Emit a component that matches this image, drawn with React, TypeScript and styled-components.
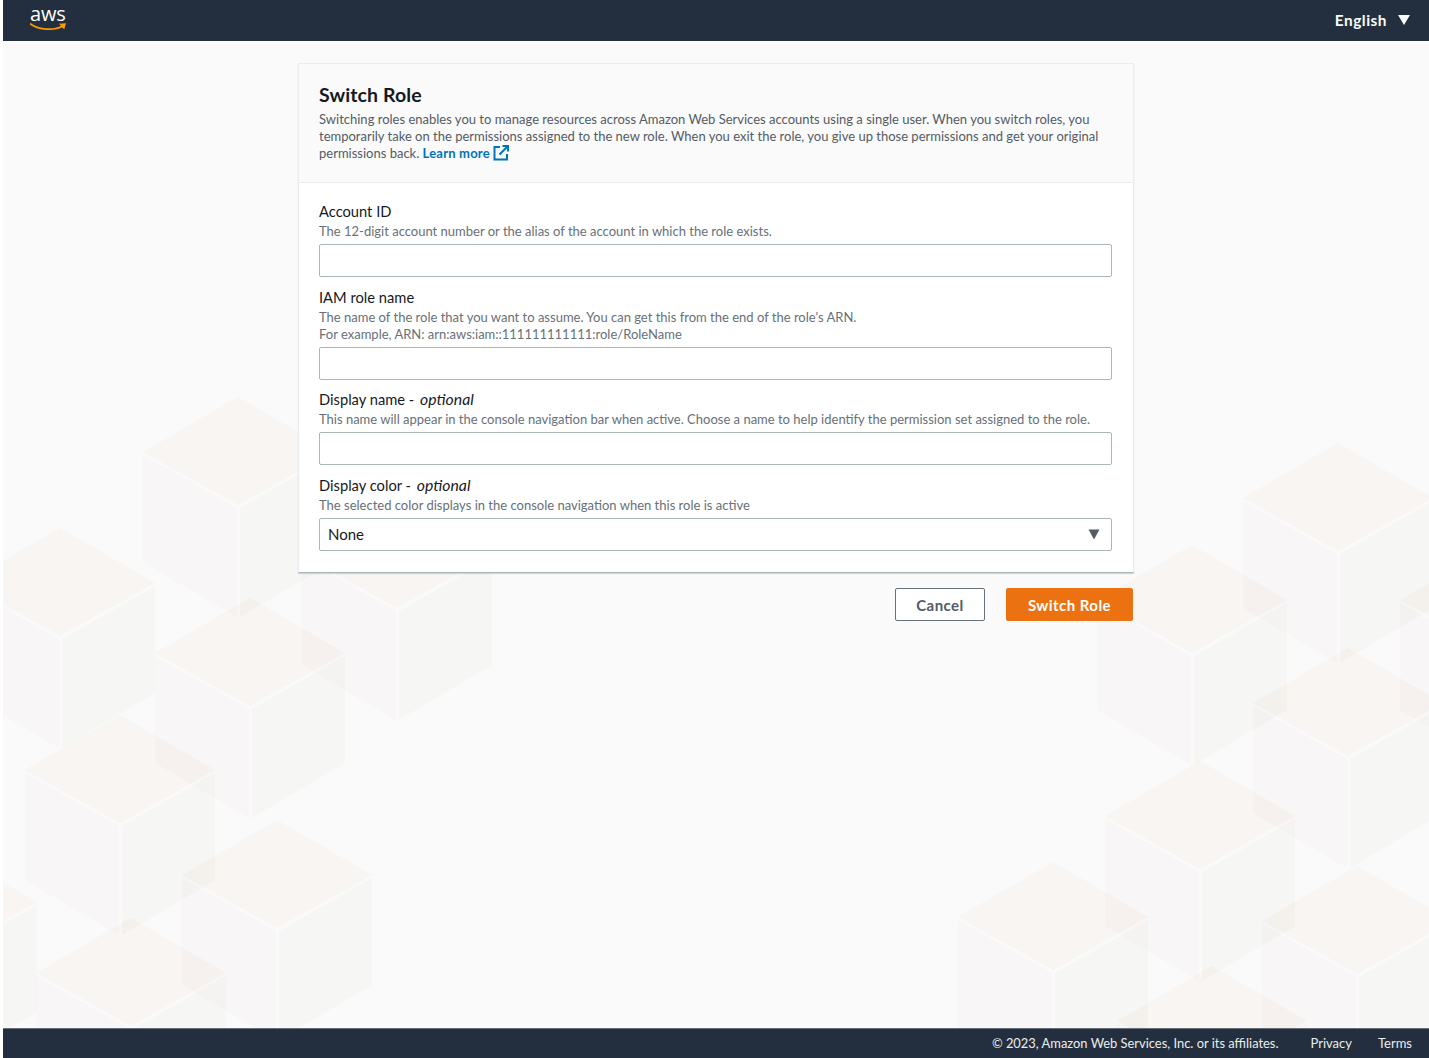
import React from "react";
import styled, { createGlobalStyle } from "styled-components";

const Global = createGlobalStyle`
  html, body { margin: 0; padding: 0; background: #fff; }
  * { box-sizing: border-box; }
  body { font-family: Lato, "Noto Sans", sans-serif; }
`;

const Page = styled.div`
  position: relative;
  height: 1058px;
  margin-left: 3px;
  display: flex;
  flex-direction: column;
  background: #fafafa;
  overflow: hidden;
`;
const Backdrop = styled.svg`
  position: absolute;
  left: -3px;
  top: 0;
  width: 1429px;
  height: 1058px;
`;
const TopBar = styled.header`
  position: relative;
  height: 42px;
  flex: none;
  background: #232f3e;
  border-bottom: 1px solid #fff;
  display: flex;
  align-items: center;
  justify-content: space-between;
  padding: 0 19px 0 27px;
  color: #fff;
`;
const Logo = styled.div`
  position: relative;
  width: 37px;
  height: 33px;
  align-self: flex-start;
`;
const LogoWord = styled.span`
  position: absolute;
  left: 0;
  top: 2px;
  font: 400 20px/24px "Open Sans", sans-serif;
  letter-spacing: -0.2px;
  color: #fff;
`;
const LogoSmile = styled.svg`
  position: absolute;
  left: 0;
  top: 23px;
  width: 37px;
  height: 10px;
`;
const Lang = styled.div`
  display: flex;
  align-items: center;
  gap: 11px;
  font-size: 15.4px;
  line-height: 18px;
  font-weight: 700;
  letter-spacing: 0.5px;
  color: #fafafa;
  padding-bottom: 2px;
`;
const Main = styled.main`
  position: relative;
  flex: 1;
  padding-top: 21px;
`;
const Column = styled.div`
  width: 836px;
  margin: 0 auto;
`;
const Card = styled.section`
  height: 510px;
  background: #fff;
  border: 1px solid #eaeded;
  border-bottom: 1px solid #aab7b8;
  box-shadow: 0 1px 1px rgba(0, 28, 36, 0.15);
`;
const CardHead = styled.div`
  height: 119px;
  background: #fafafa;
  border-bottom: 1px solid #eaeded;
  padding: 19px 20px 0;
`;
const Title = styled.h1`
  margin: 0;
  font-size: 19.5px;
  line-height: 24px;
  font-weight: 700;
  letter-spacing: 0.1px;
  color: #16191f;
`;
const Intro = styled.p`
  margin: 4px 0 0;
  font-size: 13px;
  line-height: 17px;
  color: #545b64;
`;
const LearnMore = styled.a`
  color: #0073bb;
  font-weight: 700;
  letter-spacing: 0.2px;
  text-decoration: none;
`;
const LinkIcon = styled.svg`
  margin-left: 3px;
  vertical-align: -3px;
`;
const Form = styled.form`
  padding: 19px 21px 0 20px;
  display: flex;
  flex-direction: column;
  gap: 10.5px;
`;
const Field = styled.div`
  display: flex;
  flex-direction: column;
`;
const Label = styled.label`
  font-size: 14.7px;
  line-height: 18px;
  color: #16191f;

  em {
    font-size: 15.8px;
    margin-left: 2px;
  }
`;
const Hint = styled.div`
  font-size: 13px;
  line-height: 17px;
  color: #687078;
  margin-bottom: 4px;
  margin-top: 3px;
`;
const TextInput = styled.input`
  display: block;
  width: 100%;
  height: 33px;
  border: 1px solid #aab7b8;
  border-radius: 2px;
  background: #fff;
  outline: none;
`;
const SelectWrap = styled.div`
  position: relative;
  height: 33px;
`;
const Select = styled.select`
  display: block;
  width: 100%;
  height: 33px;
  appearance: none;
  border: 1px solid #aab7b8;
  border-radius: 2px;
  background: #fff;
  padding: 0 8px;
  font: 400 15px Lato, sans-serif;
  color: #16191f;
  outline: none;
`;
const SelectArrow = styled.svg`
  position: absolute;
  right: 12px;
  top: 11px;
  width: 12px;
  height: 11px;
`;
const Actions = styled.div`
  display: flex;
  justify-content: flex-end;
  gap: 21px;
  padding: 15px 1px 0 0;
`;
const Button = styled.button<{ $primary?: boolean }>`
  height: 33px;
  width: ${(p) => (p.$primary ? "127px" : "90px")};
  border-radius: 2px;
  border: 1px solid ${(p) => (p.$primary ? "#ec7211" : "#687078")};
  background: ${(p) => (p.$primary ? "#ec7211" : "#fff")};
  color: ${(p) => (p.$primary ? "#fff" : "#545b64")};
  font: 700 15px Lato, sans-serif;
  letter-spacing: 0.45px;
  padding: 0;
`;
const Footer = styled.footer`
  position: relative;
  height: 30px;
  flex: none;
  background: #232f3e;
  border-top: 1px solid #687078;
  display: flex;
  align-items: center;
  justify-content: flex-end;
  padding: 0 17px 2px 0;
  gap: 26px;
  font-size: 13px;
  color: #eaeded;
`;
const Copyright = styled.span`
  font-size: 12.9px;
  margin-right: 6px;
`;
const FootLink = styled.a`
  color: inherit;
  text-decoration: none;
`;

const D = 95;
const H = 55;
const S = 110;

const Cube = ({ x, y }: { x: number; y: number }) => (
  <g>
    <polygon
      points={`${x},${y} ${x + D},${y + H} ${x},${y + 2 * H - 2} ${x - D},${y + H}`}
      fill="#e8cdaa"
      fillOpacity="0.09"
    />
    <polygon
      points={`${x - D},${y + H + 3} ${x - 1},${y + 2 * H + 1} ${x - 1},${y + 2 * H + S} ${x - D},${y + H + S}`}
      fill="#ecd6d0"
      fillOpacity="0.09"
    />
    <polygon
      points={`${x + D},${y + H + 3} ${x + 2},${y + 2 * H + 1} ${x + 2},${y + 2 * H + S} ${x + D},${y + H + S}`}
      fill="#d8d4c4"
      fillOpacity="0.1"
    />
  </g>
);

const cubes: [number, number][] = [
  [238, 397], [60, 528], [397, 500], [250, 598], [120, 715], [277, 820], [-58, 847], [131, 918],
  [1338, 443], [1192, 545], [1495, 545], [1348, 648], [1200, 761], [1053, 862], [1357, 866], [1212, 966],
];

const Field1 = ({ id, label, optional, hints }: { id: string; label: string; optional?: boolean; hints: string[] }) => (
  <Field>
    <Label htmlFor={id}>
      {label}
      {optional && (
        <>
          {" - "}
          <em>optional</em>
        </>
      )}
    </Label>
    <Hint>
      {hints.map((h) => (
        <div key={h}>{h}</div>
      ))}
    </Hint>
    {id === "color" ? (
      <SelectWrap>
        <Select id={id} defaultValue="None">
          <option>None</option>
        </Select>
        <SelectArrow viewBox="0 0 12 11">
          <path d="M0.5 0.5H11.5L6 10.5Z" fill="#545b64" />
        </SelectArrow>
      </SelectWrap>
    ) : (
      <TextInput id={id} />
    )}
  </Field>
);

export default function App() {
  return (
    <>
      <Global />
      <Page>
        <Backdrop viewBox="0 0 1429 1058">
          {cubes.map(([x, y]) => (
            <Cube key={`${x}-${y}`} x={x} y={y} />
          ))}
        </Backdrop>
        <TopBar>
          <Logo>
            <LogoWord>aws</LogoWord>
            <LogoSmile viewBox="0 0 37 10">
              <path d="M0.5 1C9 7 24 8 33 3" fill="none" stroke="#f90" strokeWidth="1.7" strokeLinecap="round" />
              <path d="M29 0.8L36 0.2L34.2 6.5Z" fill="#f90" />
            </LogoSmile>
          </Logo>
          <Lang>
            English
            <svg width="12" height="10" viewBox="0 0 12 10">
              <path d="M0 0H12L6 10Z" fill="#fafafa" />
            </svg>
          </Lang>
        </TopBar>
        <Main>
          <Column>
            <Card>
              <CardHead>
                <Title>Switch Role</Title>
                <Intro>
                  Switching roles enables you to manage resources across Amazon Web Services accounts using a single
                  user. When you switch roles, you temporarily take on the permissions assigned to the new role. When
                  you exit the role, you give up those permissions and get your original permissions back.{" "}
                  <LearnMore href="#">
                    Learn more
                    <LinkIcon width="16" height="16" viewBox="0 0 16 16" fill="none" stroke="#0073bb" strokeWidth="2">
                      <path d="M7 2H1.5V14.5H14V9" />
                      <path d="M6.5 9.5L14.5 1.5M9.5 1H15V6.5" />
                    </LinkIcon>
                  </LearnMore>
                </Intro>
              </CardHead>
              <Form>
                <Field1
                  id="account"
                  label="Account ID"
                  hints={["The 12-digit account number or the alias of the account in which the role exists."]}
                />
                <Field1
                  id="role"
                  label="IAM role name"
                  hints={[
                    "The name of the role that you want to assume. You can get this from the end of the role's ARN.",
                    "For example, ARN: arn:aws:iam::111111111111:role/RoleName",
                  ]}
                />
                <Field1
                  id="display"
                  label="Display name"
                  optional
                  hints={[
                    "This name will appear in the console navigation bar when active. Choose a name to help identify the permission set assigned to the role.",
                  ]}
                />
                <Field1
                  id="color"
                  label="Display color"
                  optional
                  hints={["The selected color displays in the console navigation when this role is active"]}
                />
              </Form>
            </Card>
            <Actions>
              <Button type="button">Cancel</Button>
              <Button type="button" $primary>
                Switch Role
              </Button>
            </Actions>
          </Column>
        </Main>
        <Footer>
          <Copyright>© 2023, Amazon Web Services, Inc. or its affiliates.</Copyright>
          <FootLink href="#">Privacy</FootLink>
          <FootLink href="#">Terms</FootLink>
        </Footer>
      </Page>
    </>
  );
}
